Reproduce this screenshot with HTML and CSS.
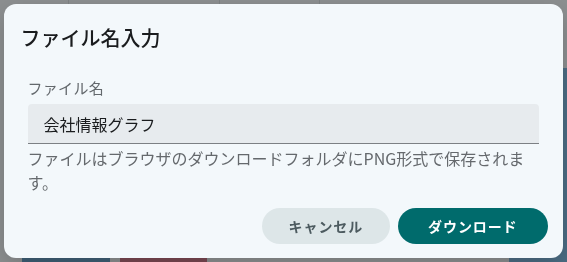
FILE: index.html
```html
<!DOCTYPE html>
<html lang="ja">
<head>
    <meta charset="UTF-8">
    <meta name="viewport" content="width=device-width, initial-scale=1.0">
    <title>ファイル名入力</title>
    <link rel="stylesheet" href="styles.css">
</head>
<body>
    <div class="page">
        <div class="page-header">
            <div class="cell c1"></div>
            <div class="cell c2"></div>
            <div class="cell c3"></div>
            <div class="cell c4"></div>
        </div>
        <div class="page-main">
            <div class="side-panel"></div>
        </div>
        <div class="page-footer">
            <div class="chip chip-blue"></div>
            <div class="chip chip-red"></div>
            <div class="chip chip-grey"></div>
            <div class="chip chip-end"></div>
        </div>
    </div>

    <div class="backdrop">
        <div class="dialog" role="dialog" aria-labelledby="dialog-title">
            <h2 class="dialog-title" id="dialog-title">ファイル名入力</h2>
            <div class="dialog-content">
                <label class="field-label" for="file-name">ファイル名</label>
                <div class="field-input">
                    <input id="file-name" type="text" value="会社情報グラフ">
                </div>
                <p class="field-helper">ファイルはブラウザのダウンロードフォルダにPNG形式で保存されます。</p>
            </div>
            <div class="dialog-actions">
                <button class="btn btn-cancel">キャンセル</button>
                <button class="btn btn-primary">ダウンロード</button>
            </div>
        </div>
    </div>
</body>
</html>
```

FILE: styles.css
```css
html {
    box-sizing: border-box;
}

*, *::before, *::after {
    box-sizing: inherit;
}

body {
    margin: 0;
    width: 567px;
    height: 262px;
    overflow: hidden;
    background: #8d9091;
    font-family: "Noto Sans CJK JP", "Noto Sans", sans-serif;
}

/* page behind the dialog (dimmed) */
.page {
    display: flex;
    flex-direction: column;
    height: 262px;
}

.page-header {
    display: flex;
    height: 68px;
}

.cell {
    border-right: 1px solid #7f8384;
}

.c1 { width: 69px; }
.c2 { width: 151px; }
.c3 { width: 100px; }
.c4 { flex: 1; border-right: none; }

.page-main {
    flex: 1;
    display: flex;
    justify-content: flex-end;
}

.side-panel {
    width: 58px;
    background: #4c6d84;
}

.page-footer {
    display: flex;
    height: 4px;
}

.chip-blue { width: 88px; margin-left: 22px; background: #3e5f76; }
.chip-red { width: 87px; margin-left: 10px; background: #7a4852; }
.chip-grey { flex: 1; }
.chip-end { width: 58px; background: #4c6d84; }

/* dialog */
.backdrop {
    position: fixed;
    inset: 0;
    display: flex;
    justify-content: center;
    align-items: center;
}

.dialog {
    width: 559px;
    height: 254px;
    margin-left: -1px;
    background: #f3f8fb;
    border-radius: 12px;
    box-shadow: 0 8px 24px rgba(0, 0, 0, 0.18);
    display: flex;
    flex-direction: column;
}

.dialog-title {
    margin: 0;
    padding: 16px 17px 0;
    font-size: 20px;
    font-weight: 500;
    line-height: 36px;
    color: #1a1c1e;
}

.dialog-content {
    padding: 0 24px;
}

.field-label {
    display: block;
    margin-top: 21px;
    font-size: 15px;
    line-height: 22px;
    color: #63686c;
    letter-spacing: 0.3px;
}

.field-input {
    margin-top: 5px;
    height: 40px;
    background: #e7ebee;
    border-bottom: 1px solid #7c8084;
    border-radius: 4px 4px 0 0;
}

.field-input input {
    width: 100%;
    height: 39px;
    padding: 0 16px;
    border: none;
    background: transparent;
    font-family: inherit;
    font-size: 16px;
    color: #1a1c1e;
    outline: none;
}

.field-helper {
    margin: 2px 0 0;
    font-size: 16px;
    line-height: 24px;
    color: #65696d;
}

.dialog-actions {
    display: flex;
    justify-content: flex-end;
    gap: 8px;
    margin-top: auto;
    padding: 0 15px 14px;
}

.btn {
    height: 36px;
    padding: 0 27px;
    border: none;
    border-radius: 18px;
    font-family: inherit;
    font-size: 14px;
    font-weight: 700;
    letter-spacing: 0.9px;
    cursor: pointer;
}

.btn-cancel {
    background: #dde6e8;
    color: #4d5b60;
}

.btn-primary {
    padding: 0 30px;
    background: #006b6c;
    color: #ffffff;
}
```
